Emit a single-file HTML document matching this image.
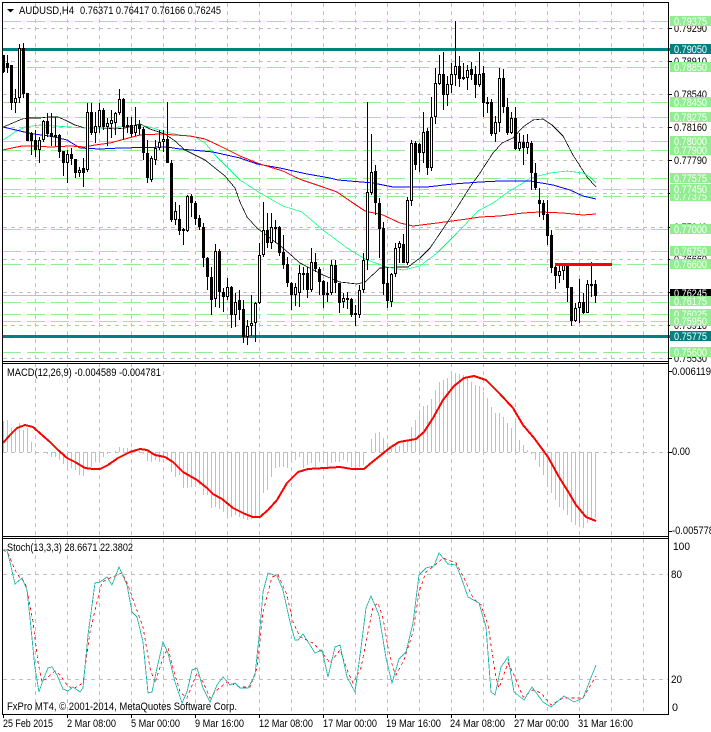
<!DOCTYPE html>
<html><head><meta charset="utf-8"><style>
html,body{margin:0;padding:0;background:#fff}
svg{display:block}
text{font-family:"Liberation Sans",sans-serif;font-size:11px}
</style></head><body>
<svg xmlns="http://www.w3.org/2000/svg" width="711" height="732" viewBox="0 0 711 732">
<rect width="711" height="732" fill="#fff"/>
<g shape-rendering="crispEdges" fill="none">
<!-- grid -->
<path stroke="#c0c0c0" stroke-dasharray="4 4" d="M35.5 3V714M67.5 3V714M99.5 3V714M131.5 3V714M163.5 3V714M195.5 3V714M227.5 3V714M259.5 3V714M291.5 3V714M323.5 3V714M355.5 3V714M387.5 3V714M419.5 3V714M451.5 3V714M483.5 3V714M515.5 3V714M547.5 3V714M579.5 3V714M611.5 3V714M643.5 3V714"/>
<path stroke="#c0c0c0" stroke-dasharray="4 4" d="M3 28.5H668M3 61.5H668M3 94.5H668M3 127.5H668M3 160.5H668M3 193.5H668M3 227.5H668M3 259.5H668M3 292.5H668M3 325.5H668M3 358.5H668M3 452.5H668M3 574.5H668M3 679.5H668"/>
<path stroke="#c0c0c0" d="M3 295.5H668"/>
<!-- horizontal green levels -->
<path stroke="#90ee90" stroke-dasharray="18 6" d="M3 21.5H668M3 67.5H668M3 102.5H668M3 117.5H668M3 141.5H668M3 150.5H668M3 178.5H668M3 189.5H668M3 196.5H668M3 229.5H668M3 251.5H668M3 264.5H668M3 302.5H668M3 314.5H668M3 321.5H668M3 352.5H668"/>
<!-- teal -->
<path stroke="#008080" stroke-width="3" d="M3 49.5H670M3 336.5H670"/>
<!-- moving averages -->
<g stroke-width="0.75">
<polyline stroke="#000" points="3,127 8,125 15,122 22,119 30,118 40,118 48,117 58,117 65,120 75,125 85,128 95,128 105,128 115,129 125,128 140,124 150,129 165,134 175,141 185,150 195,155 205,160 215,168 225,176 235,188 240,202 247,217 257,228 283,248 300,263 323,275 340,282 357,284 365,282 380,268 397,267 408,267 420,258 430,248 447,223 460,203 470,187 480,173 493,153 502,143 513,138 523,127 533,120 543,119 552,125 563,136 573,155 587,177 596,187"/>
<polyline stroke="#00ff7f" points="3,140 15,132 25,127 40,125 55,126 70,127 85,128 100,128 120,127 140,125 150,127 165,132 180,135 195,137 205,143 215,155 225,165 240,180 260,193 283,206 302,212 323,230 350,250 367,260 387,267 403,270 420,266 437,253 457,233 478,211 493,203 508,192 523,183 530,178 550,173 567,171 583,173 590,177 596,183"/>
<polyline stroke="#0000ff" stroke-width="1" points="3,127 20,131 33,134 50,136 67,140 80,148 100,149 120,148 167,147 180,149 213,152 240,158 257,164 280,168 307,174 330,178 338,180 373,183 393,187 427,187 453,184 480,182 500,181 530,181 553,185 570,190 583,196 596,199"/>
<polyline stroke="#ff0000" stroke-width="1" points="3,150 12,148 22,146 35,146 50,147 70,146 85,147 95,145 110,143 125,139 140,135 160,134 175,135 190,136 205,139 220,146 240,156 257,163 273,168 283,171 295,177 302,180 323,187 337,192 353,203 365,211 383,215 400,223 413,226 437,223 467,219 480,217 500,216 523,213 540,212 563,213 583,215 596,214"/>
</g>
<!-- candle wicks -->
<path stroke="#000" d="M3.5 55V73M7.5 55V73M11.5 65V110M15.5 89V113M19.5 44V103M23.5 43V98M27.5 93V141M31.5 132V155M35.5 130V157M39.5 137V163M43.5 120V142M47.5 113V137M51.5 113V146M55.5 117V146M59.5 134V158M63.5 151V176M67.5 150V183M71.5 148V165M75.5 159V178M79.5 167V177M83.5 158V187M87.5 103V172M91.5 103V135M95.5 112V143M99.5 103V133M103.5 108V130M107.5 118V146M111.5 110V138M115.5 112V135M119.5 89V115M123.5 98V140M127.5 117V133M131.5 117V137M135.5 107V136M139.5 120V135M143.5 127V160M147.5 140V183M151.5 156V182M155.5 140V165M159.5 130V150M163.5 130V152M167.5 102V163M171.5 160V222M175.5 202V225M179.5 205V235M183.5 228V245M187.5 195V232M191.5 194V217M195.5 201V225M199.5 215V230M203.5 223V267M207.5 257V290M211.5 267V315M215.5 244V307M219.5 249V308M223.5 288V312M227.5 278V300M231.5 286V328M235.5 293V327M239.5 290V320M243.5 300V343M247.5 320V345M251.5 295V336M255.5 302V342M259.5 243V304M263.5 202V257M267.5 213V248M271.5 213V249M275.5 220V243M279.5 226V256M283.5 235V269M287.5 257V287M291.5 282V310M295.5 283V306M299.5 265V307M303.5 267V290M307.5 267V298M311.5 248V292M315.5 253V272M319.5 267V295M323.5 280V308M327.5 282V302M331.5 260V295M335.5 260V293M339.5 283V313M343.5 293V308M347.5 292V309M351.5 298V317M355.5 305V326M359.5 285V318M363.5 253V293M367.5 102V270M371.5 134V195M375.5 165V215M379.5 198V258M383.5 222V295M387.5 267V308M391.5 273V307M395.5 243V277M399.5 241V263M403.5 234V263M407.5 197V265M411.5 140V206M415.5 141V170M419.5 143V172M423.5 112V163M427.5 128V175M431.5 97V171M435.5 68V124M439.5 55V85M443.5 52V110M447.5 76V106M451.5 63V93M455.5 21V86M459.5 56V87M463.5 63V80M467.5 65V90M471.5 62V80M475.5 66V98M479.5 52V87M483.5 66V117M487.5 97V113M491.5 99V136M495.5 116V142M499.5 68V132M503.5 69V113M507.5 98V135M511.5 112V134M515.5 107V150M519.5 133V151M523.5 135V165M527.5 134V154M531.5 141V190M535.5 163V190M539.5 188V217M543.5 200V220M547.5 200V245M551.5 230V273M555.5 263V289M559.5 263V283M563.5 263V280M567.5 263V302M571.5 287V326M575.5 303V322M579.5 279V323M583.5 293V314M587.5 280V313M591.5 262V297M595.5 280V303"/>
<!-- candle bodies -->
<path stroke="#000" stroke-width="3" d="M3.5 55V72M7.5 63V68M11.5 65V103M15.5 98V103M19.5 48V98M23.5 48V94M27.5 93V141M31.5 133V141M35.5 140V150M39.5 140V150M43.5 121V140M47.5 121V134M51.5 133V137M55.5 135V137M59.5 135V152M63.5 151V163M67.5 154V163M71.5 154V159M75.5 159V173M79.5 170V173M83.5 168V173M87.5 112V170M91.5 112V133M95.5 126V133M99.5 110V127M103.5 110V127M107.5 123V127M111.5 120V124M115.5 113V123M119.5 99V113M123.5 99V127M127.5 125V127M131.5 125V134M135.5 125V133M139.5 125V129M143.5 129V153M147.5 153V178M151.5 158V180M155.5 148V160M159.5 142V148M163.5 139V142M167.5 139V163M171.5 163V220M175.5 211V220M179.5 219V231M183.5 229V231M187.5 196V231M191.5 196V203M195.5 203V219M199.5 218V227M203.5 227V258M207.5 258V277M211.5 277V300M215.5 251V299M219.5 251V292M223.5 292V297M227.5 287V297M231.5 287V315M235.5 302V315M239.5 300V310M243.5 309V337M247.5 326V337M251.5 323V326M255.5 303V323M259.5 255V303M263.5 230V255M267.5 230V243M271.5 227V243M275.5 227V229M279.5 227V253M283.5 252V265M287.5 264V283M291.5 283V295M295.5 287V295M299.5 273V293M303.5 273V275M307.5 273V290M311.5 262V290M315.5 262V269M319.5 269V282M323.5 281V295M327.5 293V295M331.5 265V293M335.5 265V283M339.5 283V303M343.5 298V302M347.5 298V300M351.5 299V315M355.5 313V315M359.5 290V315M363.5 260V290M367.5 192V260M371.5 172V193M375.5 171V203M379.5 203V229M383.5 228V284M387.5 283V301M391.5 274V302M395.5 248V274M399.5 243V248M403.5 244V263M407.5 200V263M411.5 143V201M415.5 143V165M419.5 144V153M423.5 132V153M427.5 131V168M431.5 117V168M435.5 83V117M439.5 74V84M443.5 74V95M447.5 84V95M451.5 74V85M455.5 66V75M459.5 66V79M463.5 77V79M467.5 70V78M471.5 69V75M475.5 74V85M479.5 74V85M483.5 73V103M487.5 102V104M491.5 102V134M495.5 122V134M499.5 78V123M503.5 78V107M507.5 107V133M511.5 118V133M515.5 118V149M519.5 142V149M523.5 142V148M527.5 142V148M531.5 143V173M535.5 173V188M539.5 200V204M543.5 203V215M547.5 214V236M551.5 235V268M555.5 267V276M559.5 271V276M563.5 264V271M567.5 263V288M571.5 287V321M575.5 308V321M579.5 302V308M583.5 302V313M587.5 284V313M591.5 284V286M595.5 284V296"/>
<!-- hollow candle interiors -->
<path stroke="#fff" d="M15.5 99V102M19.5 49V97M39.5 141V149M43.5 122V139M67.5 155V162M79.5 171V172M87.5 113V169M95.5 127V132M99.5 111V126M107.5 124V126M111.5 121V123M115.5 114V122M119.5 100V112M135.5 126V132M151.5 159V179M155.5 149V159M159.5 143V147M163.5 140V141M175.5 212V219M187.5 197V230M215.5 252V298M227.5 288V296M235.5 303V314M247.5 327V336M251.5 324V325M255.5 304V322M259.5 256V302M263.5 231V254M271.5 228V242M295.5 288V294M299.5 274V292M311.5 263V289M331.5 266V292M343.5 299V301M359.5 291V314M363.5 261V289M367.5 193V259M371.5 173V192M391.5 275V301M395.5 249V273M399.5 244V247M407.5 201V262M411.5 144V200M423.5 133V152M431.5 118V167M435.5 84V116M439.5 75V83M447.5 85V94M451.5 75V84M455.5 67V74M463.5 78V78M467.5 71V77M479.5 75V84M495.5 123V133M499.5 79V122M511.5 119V132M519.5 143V148M527.5 143V147M559.5 272V275M563.5 265V270M575.5 309V320M579.5 303V307M587.5 285V312M591.5 285V285"/>
<!-- red level -->
<path stroke="#ff0000" stroke-width="3" d="M555 264.5H612"/>
<!-- MACD histogram -->
<path stroke="#c0c0c0" d="M3.5 452V421M7.5 452V420M11.5 452V428M15.5 452V430M19.5 452V423M23.5 452V430M27.5 452V428M31.5 452V442M47.5 452V454M51.5 452V457M55.5 452V457M59.5 452V460M63.5 452V464M67.5 452V467M71.5 452V468M75.5 452V470M79.5 452V475M83.5 452V476M87.5 452V468M91.5 452V467M95.5 452V462M99.5 452V461M103.5 452V457M107.5 452V454M115.5 452V451M119.5 452V447M123.5 452V448M127.5 452V448M131.5 452V449M135.5 452V450M139.5 452V451M143.5 452V454M147.5 452V461M151.5 452V462M155.5 452V460M159.5 452V462M163.5 452V457M167.5 452V460M171.5 452V472M175.5 452V477M179.5 452V475M183.5 452V488M187.5 452V488M191.5 452V487M195.5 452V483M199.5 452V485M203.5 452V495M207.5 452V495M211.5 452V508M215.5 452V507M219.5 452V509M223.5 452V512M227.5 452V516M231.5 452V517M235.5 452V515M239.5 452V517M243.5 452V519M247.5 452V520M251.5 452V519M255.5 452V516M259.5 452V515M263.5 452V493M267.5 452V490M271.5 452V477M275.5 452V468M279.5 452V467M283.5 452V467M287.5 452V468M291.5 452V462M295.5 452V460M299.5 452V457M303.5 452V468M307.5 452V465M311.5 452V463M315.5 452V467M319.5 452V462M323.5 452V463M327.5 452V467M331.5 452V463M335.5 452V462M339.5 452V462M343.5 452V460M347.5 452V462M351.5 452V467M355.5 452V467M359.5 452V467M363.5 452V465M371.5 452V439M375.5 452V433M379.5 452V432M383.5 452V438M387.5 452V447M391.5 452V448M395.5 452V443M399.5 452V446M403.5 452V440M407.5 452V441M411.5 452V427M415.5 452V420M419.5 452V410M423.5 452V406M427.5 452V405M431.5 452V399M435.5 452V390M439.5 452V382M443.5 452V380M447.5 452V378M451.5 452V374M455.5 452V373M459.5 452V374M463.5 452V375M467.5 452V377M471.5 452V382M475.5 452V385M479.5 452V386M483.5 452V392M487.5 452V398M491.5 452V407M495.5 452V413M499.5 452V413M503.5 452V417M507.5 452V423M511.5 452V428M515.5 452V418M519.5 452V440M523.5 452V445M527.5 452V450M531.5 452V454M535.5 452V460M539.5 452V467M543.5 452V475M547.5 452V483M551.5 452V493M555.5 452V500M559.5 452V507M563.5 452V510M567.5 452V515M571.5 452V522M575.5 452V525M579.5 452V527M583.5 452V528M587.5 452V523M591.5 452V520M595.5 452V518"/>
<!-- MACD signal -->
<polyline stroke="#ff0000" stroke-width="2" points="3,443 10,435 17,428 25,425 33,427 42,435 50,442 58,450 67,458 75,462 85,468 93,469 100,469 108,465 118,458 130,452 140,449 147,450 155,455 165,457 173,462 183,472 197,480 207,488 213,494 222,499 233,508 245,514 253,517 260,517 268,510 277,500 287,483 298,472 308,469 325,468 340,467 352,469 364,469 371,463 381,455 391,447 399,442 416,439 424,432 433,418 443,400 454,386 464,378 474,376 486,380 499,393 513,408 523,425 534,438 548,457 559,477 569,493 576,505 586,517 596,521"/>
<!-- Stochastic -->
<polyline stroke="#ff0000" stroke-width="0.8" stroke-dasharray="3 3" points="3,550 8,553 15,570 20,578 25,582 28,595 33,622 38,662 42,682 48,677 55,671 60,675 67,685 73,689 83,683 90,632 97,602 102,582 110,578 122,573 128,585 135,605 143,627 150,668 155,683 163,658 168,648 173,668 180,692 187,698 197,673 203,682 210,698 217,690 227,682 240,687 250,687 257,668 263,612 272,577 278,575 287,595 293,622 300,637 313,643 320,650 330,663 340,650 348,672 353,683 361,668 368,632 373,607 378,603 383,618 388,648 393,668 396,675 404,660 413,632 419,592 426,572 434,566 443,558 456,563 464,578 473,598 481,605 488,625 496,678 499,688 508,663 514,675 523,697 533,690 541,693 551,705 563,698 571,698 583,698 596,676"/>
<polyline stroke="#20b2aa" stroke-width="0.85" points="3,550 7,550 10,562 15,584 22,578 27,590 30,618 35,668 39,692 43,680 48,668 52,667 57,675 63,689 68,691 73,687 80,692 83,688 88,635 95,583 100,582 107,577 112,585 119,567 127,585 132,612 137,617 143,642 148,693 152,692 157,668 163,642 168,653 175,682 182,703 187,692 192,670 197,668 203,688 210,702 217,685 223,677 230,685 235,683 240,688 248,688 255,675 260,628 263,592 268,573 277,576 283,590 290,622 295,640 298,640 303,634 310,645 315,653 322,650 328,677 335,647 340,645 347,677 355,692 361,648 366,608 371,596 379,615 386,658 392,683 399,659 406,652 413,623 419,575 426,568 434,566 439,553 448,564 456,565 461,577 468,597 479,603 486,627 491,692 495,695 501,667 508,657 514,692 524,700 532,687 543,702 551,707 564,696 574,702 583,698 596,665"/>
<!-- frames -->
<path stroke="#000" d="M2.5 2.5H668.5V714.5H2.5ZM2.5 361.5H668.5M2.5 363.5H668.5M2.5 536.5H668.5M2.5 538.5H668.5"/>
<path stroke="#000" d="M668 28.5H672M668 61.5H672M668 94.5H672M668 127.5H672M668 160.5H672M668 193.5H672M668 227.5H672M668 259.5H672M668 292.5H672M668 325.5H672M668 358.5H672M668 371.5H672M668 452.5H672M668 531.5H672M3.5 714V718M67.5 714V718M131.5 714V718M195.5 714V718M259.5 714V718M323.5 714V718M387.5 714V718M451.5 714V718M515.5 714V718M579.5 714V718"/>
</g>
<path d="M7 9H14L10.5 12.5Z" fill="#000"/>
<!-- labels -->
<g fill="#000">
<text x="19" y="14" textLength="55" lengthAdjust="spacingAndGlyphs">AUDUSD,H4</text>
<text x="80" y="14" textLength="141" lengthAdjust="spacingAndGlyphs">0.76371 0.76417 0.76166 0.76245</text>
<text x="7" y="376" textLength="154" lengthAdjust="spacingAndGlyphs">MACD(12,26,9) -0.004589 -0.004781</text>
<text x="7" y="551" textLength="126" lengthAdjust="spacingAndGlyphs">Stoch(13,3,3) 28.6671 22.3802</text>
<text x="7" y="710" textLength="230" lengthAdjust="spacingAndGlyphs">FxPro MT4, © 2001-2014, MetaQuotes Software Corp.</text>
<text x="674" y="32" textLength="33" lengthAdjust="spacingAndGlyphs">0.79290</text>
<text x="674" y="65" textLength="33" lengthAdjust="spacingAndGlyphs">0.78910</text>
<text x="674" y="98" textLength="33" lengthAdjust="spacingAndGlyphs">0.78540</text>
<text x="674" y="131" textLength="33" lengthAdjust="spacingAndGlyphs">0.78160</text>
<text x="674" y="164" textLength="33" lengthAdjust="spacingAndGlyphs">0.77790</text>
<text x="674" y="231" textLength="33" lengthAdjust="spacingAndGlyphs">0.77040</text>
<text x="674" y="263" textLength="33" lengthAdjust="spacingAndGlyphs">0.76660</text>
<text x="674" y="329" textLength="33" lengthAdjust="spacingAndGlyphs">0.75910</text>
<text x="674" y="362" textLength="33" lengthAdjust="spacingAndGlyphs">0.75530</text>
<text x="672" y="375" textLength="39" lengthAdjust="spacingAndGlyphs">0.006119</text>
<text x="672" y="455" textLength="18" lengthAdjust="spacingAndGlyphs">0.00</text>
<text x="672" y="534" textLength="42" lengthAdjust="spacingAndGlyphs">-0.005778</text>
<text x="673" y="550" textLength="17" lengthAdjust="spacingAndGlyphs">100</text>
<text x="671" y="578" textLength="11" lengthAdjust="spacingAndGlyphs">80</text>
<text x="671" y="683" textLength="11" lengthAdjust="spacingAndGlyphs">20</text>
<text x="672" y="711" textLength="6" lengthAdjust="spacingAndGlyphs">0</text>
<text x="3" y="727" textLength="50" lengthAdjust="spacingAndGlyphs">25 Feb 2015</text>
<text x="67" y="727" textLength="49" lengthAdjust="spacingAndGlyphs">2 Mar 08:00</text>
<text x="131" y="727" textLength="49" lengthAdjust="spacingAndGlyphs">5 Mar 00:00</text>
<text x="195" y="727" textLength="49" lengthAdjust="spacingAndGlyphs">9 Mar 16:00</text>
<text x="259" y="727" textLength="54" lengthAdjust="spacingAndGlyphs">12 Mar 08:00</text>
<text x="323" y="727" textLength="54" lengthAdjust="spacingAndGlyphs">17 Mar 00:00</text>
<text x="386" y="727" textLength="55" lengthAdjust="spacingAndGlyphs">19 Mar 16:00</text>
<text x="450" y="727" textLength="55" lengthAdjust="spacingAndGlyphs">24 Mar 08:00</text>
<text x="514" y="727" textLength="55" lengthAdjust="spacingAndGlyphs">27 Mar 00:00</text>
<text x="578" y="727" textLength="55" lengthAdjust="spacingAndGlyphs">31 Mar 16:00</text>
</g>
<!-- bid tag, partly covered by the tag below it -->
<rect x="670" y="289" width="41" height="8" fill="#000" shape-rendering="crispEdges"/>
<text x="674" y="297" textLength="33" lengthAdjust="spacingAndGlyphs" fill="#fff">0.76245</text>
<!-- price tags -->
<g shape-rendering="crispEdges" fill="#90ee90">
<rect x="670" y="16" width="41" height="10"/>
<rect x="670" y="44" width="41" height="10" fill="#008080"/>
<rect x="670" y="62" width="41" height="10"/>
<rect x="670" y="97" width="41" height="10"/>
<rect x="670" y="112" width="41" height="10"/>
<rect x="670" y="136" width="41" height="10"/>
<rect x="670" y="145" width="41" height="10"/>
<rect x="670" y="173" width="41" height="10"/>
<rect x="670" y="191" width="41" height="10"/>
<rect x="670" y="224" width="41" height="10"/>
<rect x="670" y="246" width="41" height="10"/>
<rect x="670" y="259" width="41" height="10"/>
<rect x="670" y="296" width="41" height="10"/>
<rect x="670" y="309" width="41" height="10"/>
<rect x="670" y="331" width="41" height="10" fill="#008080"/>
<rect x="670" y="347" width="41" height="10"/>
</g>
<g fill="#fff">
<text x="674" y="25" textLength="33" lengthAdjust="spacingAndGlyphs">0.79375</text>
<text x="674" y="53" textLength="33" lengthAdjust="spacingAndGlyphs">0.79050</text>
<text x="674" y="71" textLength="33" lengthAdjust="spacingAndGlyphs">0.78850</text>
<text x="674" y="106" textLength="33" lengthAdjust="spacingAndGlyphs">0.78450</text>
<text x="674" y="121" textLength="33" lengthAdjust="spacingAndGlyphs">0.78275</text>
<text x="674" y="145" textLength="33" lengthAdjust="spacingAndGlyphs">0.78000</text>
<text x="674" y="154" textLength="33" lengthAdjust="spacingAndGlyphs">0.77900</text>
<text x="674" y="182" textLength="33" lengthAdjust="spacingAndGlyphs">0.77575</text>
<text x="674" y="200" textLength="33" lengthAdjust="spacingAndGlyphs">0.77375</text>
<rect x="670" y="184" width="41" height="10" fill="#90ee90" shape-rendering="crispEdges"/>
<text x="674" y="193" textLength="33" lengthAdjust="spacingAndGlyphs">0.77450</text>
<text x="674" y="233" textLength="33" lengthAdjust="spacingAndGlyphs">0.77000</text>
<text x="674" y="255" textLength="33" lengthAdjust="spacingAndGlyphs">0.76750</text>
<text x="674" y="268" textLength="33" lengthAdjust="spacingAndGlyphs">0.76600</text>
<text x="674" y="305" textLength="33" lengthAdjust="spacingAndGlyphs">0.76175</text>
<text x="674" y="318" textLength="33" lengthAdjust="spacingAndGlyphs">0.76025</text>
<rect x="670" y="316" width="41" height="10" fill="#90ee90" shape-rendering="crispEdges"/>
<text x="674" y="325" textLength="33" lengthAdjust="spacingAndGlyphs">0.75950</text>
<text x="674" y="340" textLength="33" lengthAdjust="spacingAndGlyphs">0.75775</text>
<text x="674" y="356" textLength="33" lengthAdjust="spacingAndGlyphs">0.75600</text>
</g>
</svg>
</body></html>
